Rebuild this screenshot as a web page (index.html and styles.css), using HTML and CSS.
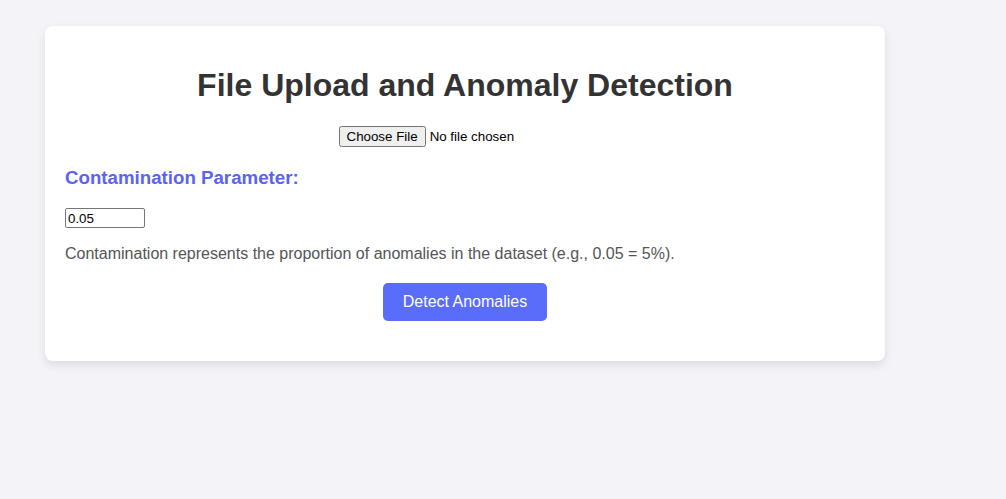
FILE: index.html
```html
<!DOCTYPE html>
<html>
<head>
<meta charset="utf-8">
<title>File Upload and Anomaly Detection</title>
<link rel="stylesheet" href="styles.css">
</head>
<body>
<div class="card">
  <h1 class="title">File Upload and Anomaly Detection</h1>
  <div class="upload">
    <input type="file" class="file-input">
  </div>
  <label class="param-label" for="contamination">Contamination Parameter:</label>
  <input type="text" id="contamination" class="param-input" value="0.05">
  <p class="hint">Contamination represents the proportion of anomalies in the dataset (e.g., 0.05 = 5%).</p>
  <div class="actions">
    <button class="detect-btn">Detect Anomalies</button>
  </div>
</div>
</body>
</html>
```

FILE: styles.css
```css
html, body {
  margin: 0;
  padding: 0;
}
body {
  background: #f4f4f8;
  font-family: "Liberation Sans", Arial, sans-serif;
  padding: 26px 45px;
}
.card {
  width: 840px;
  box-sizing: border-box;
  background: #ffffff;
  border-radius: 8px;
  box-shadow: 0 4px 10px rgba(0, 0, 0, 0.1);
  padding: 20px 20px 40px;
}
.title {
  text-align: center;
  color: #333333;
  font-size: 32px;
  font-weight: bold;
  margin: 21px 0 22px;
}
.upload {
  text-align: center;
  margin-bottom: 20px;
}
.file-input {
  font-family: "Liberation Sans", Arial, sans-serif;
  font-size: 13.333px;
}
.param-label {
  display: block;
  color: #5a63f2;
  font-size: 18.7px;
  font-weight: bold;
  margin: 0 0 19px;
}
.param-input {
  display: block;
  width: 80px;
  box-sizing: border-box;
  height: 20px;
  font-family: "Liberation Sans", Arial, sans-serif;
  font-size: 13.333px;
  padding: 1px 2px;
  border: 1px solid #767676;
  border-radius: 2px;
  margin: 0;
}
.hint {
  color: #555555;
  font-size: 16px;
  margin: 17px 0 20px;
}
.actions {
  text-align: center;
}
.detect-btn {
  background: #5a6cfa;
  color: #ffffff;
  border: none;
  border-radius: 5px;
  padding: 10px 20px;
  font-family: "Liberation Sans", Arial, sans-serif;
  font-size: 16px;
  cursor: pointer;
}
```
